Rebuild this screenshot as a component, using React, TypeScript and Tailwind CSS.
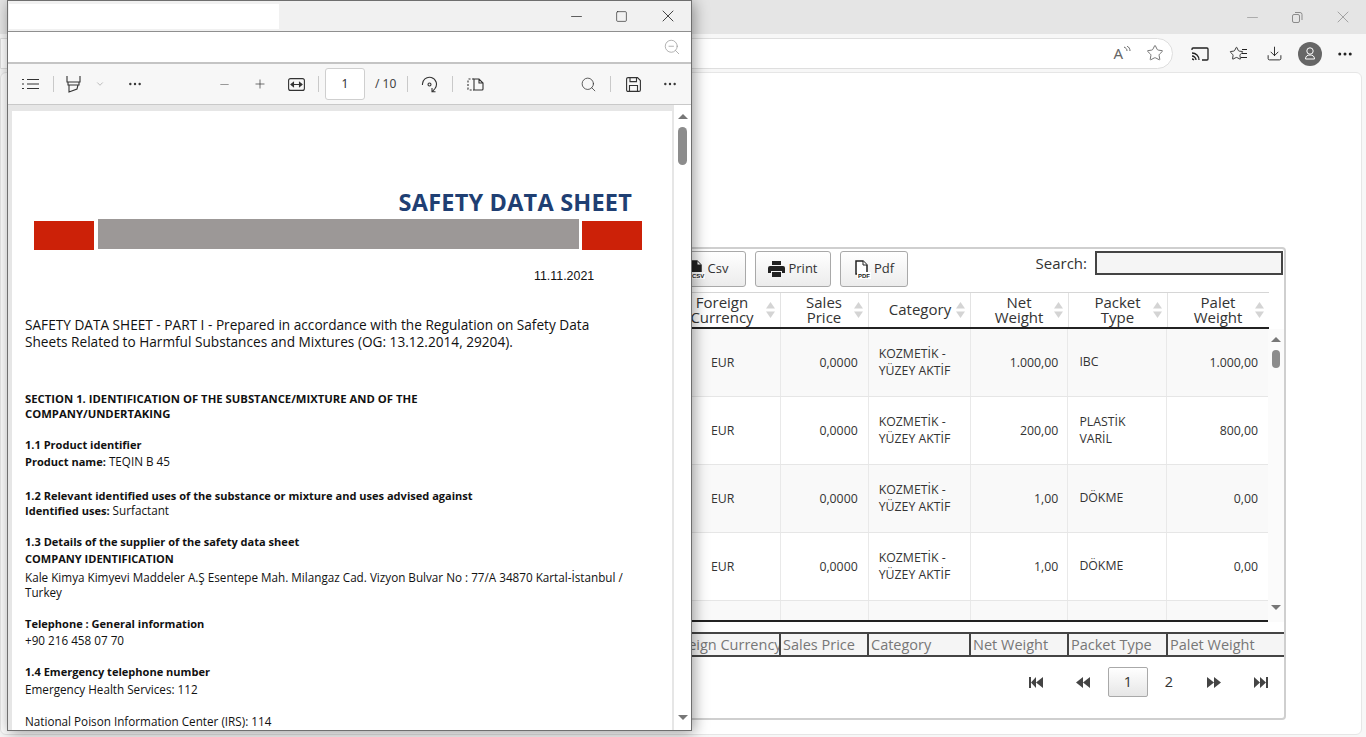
import React from 'react';
import { ChevronDown, Minus, Plus, Search, X, Square, MoreHorizontal, ZoomOut, Star, Download } from 'lucide-react';

const rows = [
  { net: '1.000,00', packet: ['IBC'], palet: '1.000,00' },
  { net: '200,00', packet: ['PLASTİK', 'VARİL'], palet: '800,00' },
  { net: '1,00', packet: ['DÖKME'], palet: '0,00' },
  { net: '1,00', packet: ['DÖKME'], palet: '0,00' },
];

const footerCols = [
  { label: 'Foreign Currency', w: 'w-[112px] indent-[-5px]' },
  { label: 'Sales Price', w: 'w-[88px]' },
  { label: 'Category', w: 'w-[102px]' },
  { label: 'Net Weight', w: 'w-[98px]' },
  { label: 'Packet Type', w: 'w-[99px]' },
  { label: 'Palet Weight', w: 'w-[118px]' },
];

function SortArrows() {
  return (
    <svg width="9" height="16" viewBox="0 0 9 16" className="shrink-0 text-[#d4d4d4]" fill="currentColor">
      <path d="M4.5 0 9 6.5H0z" />
      <path d="M4.5 16 0 9.500h9z" />
    </svg>
  );
}

function HeaderCell({ lines, w }: { lines: string[]; w: string }) {
  return (
    <div className={`${w} flex items-center justify-between pr-[5px] border-r border-[#e3e3e3] last:border-r-0`}>
      <div className="flex-1 text-center text-[15px] leading-[15px] text-[#333] pb-[1px]">
        {lines.map((l) => (
          <div key={l}>{l}</div>
        ))}
      </div>
      <SortArrows />
    </div>
  );
}

function Row({ r, odd }: { r: (typeof rows)[number] | null; odd: boolean }) {
  return (
    <div className={`flex h-[68px] shrink-0 border-b border-[#e6e6e6] text-[12.3px] leading-[17px] text-[#333] ${odd ? 'bg-[#f9f9f9]' : 'bg-white'}`}>
      <div className="w-[112px] flex items-center pl-[42px] border-r border-[#e9e9e9]">{r && 'EUR'}</div>
      <div className="w-[88px] flex items-center justify-end pr-[10px] border-r border-[#e9e9e9]">{r && '0,0000'}</div>
      <div className="w-[102px] flex items-center pl-[10px] pb-[2px] border-r border-[#e9e9e9]">
        {r && (
          <div>
            <div>KOZMETİK -</div>
            <div>YÜZEY AKTİF</div>
          </div>
        )}
      </div>
      <div className="w-[98px] flex items-center justify-end pr-[9px] border-r border-[#e9e9e9]">{r?.net}</div>
      <div className="w-[99px] flex items-center pl-[11px] pb-[2px] border-r border-[#e9e9e9]">
        {r && (
          <div>
            {r.packet.map((p) => (
              <div key={p}>{p}</div>
            ))}
          </div>
        )}
      </div>
      <div className="w-[101px] flex items-center justify-end pr-[10px]">{r?.palet}</div>
    </div>
  );
}

function ToolButton({ children, w }: { children: React.ReactNode; w: string }) {
  return (
    <button className={`${w} h-[36px] flex items-center justify-center gap-[3px] rounded-[3px] border border-[#a9a9a9] bg-gradient-to-b from-white to-[#ececec] text-[13px] text-[#333]`}>
      {children}
    </button>
  );
}

function FileIcon({ tag }: { tag: string }) {
  return (
    <svg width="17" height="19" viewBox="0 0 17 19">
      <path d="M2 1h7l4 4v9H2z" fill={tag === 'CSV' ? '#222' : 'white'} stroke="#222" strokeWidth="1.500" />
      <path d="M9 1v4h4" fill="white" stroke="#222" strokeWidth="1" />
      <rect x="3" y="12" width="14" height="7" fill="white" />
      <text x="4" y="18" fontSize="6" fontWeight="700" fontFamily="Liberation Sans, sans-serif" fill="#222">{tag}</text>
    </svg>
  );
}

function PagerIcon({ d }: { d: string }) {
  return (
    <svg width="14" height="11" viewBox="0 0 14 11" fill="#444">
      <path d={d} />
    </svg>
  );
}

function Divider() {
  return <div className="h-[16px] w-px bg-[#c9c9c9]" />;
}

function BrowserWindow() {
  return (
    <div className="w-[1366px] h-[737px] flex flex-col bg-[#f7f7f7]">
      <div className="h-[34px] shrink-0 bg-[#e5e5e5] flex justify-end items-center gap-[29px] pr-[13px] text-[#8b8b8b]">
        <Minus size={17} strokeWidth={0.900} />
        <svg width="14" height="14" viewBox="0 0 14 14" fill="none" stroke="currentColor">
          <rect x="2.500" y="4.500" width="7" height="8" rx="1.500" />
          <path d="M5 2.500h5a2 2 0 0 1 2 2V10" />
        </svg>
        <X size={20} strokeWidth={0.900} />
      </div>
      <div className="h-[38px] shrink-0 flex items-center pr-[12px]">
        <div className="w-[1173px] h-[31px] bg-white border border-[#dedede] rounded-r-full flex justify-end items-center gap-[15px] pr-[8px] text-[#666]">
          <div className="relative text-[15px] leading-none pr-[8px] font-['Noto_Sans',sans-serif]">
            A
            <svg width="8" height="10" viewBox="0 0 8 10" fill="none" stroke="currentColor" className="absolute right-0 top-0">
              <path d="M1 1c2 1 3 2 3 4M4 0c2 1 3 3 3 5" />
            </svg>
          </div>
          <Star size={18} strokeWidth={1.200} />
        </div>
        <div className="flex items-center text-[#222] pt-[1px]">
          <svg width="18" height="14" viewBox="0 0 18 14" fill="none" stroke="currentColor" strokeWidth="1.300" className="ml-[18px]">
            <path d="M1 3V2a1 1 0 0 1 1-1h14a1 1 0 0 1 1 1v10a1 1 0 0 1-1 1h-5" />
            <path d="M1 6c4 0 7 3 7 7M1 9c2 0 4 2 4 4M1 12c1 0 1 0 2 1" />
          </svg>
          <div className="relative ml-[20px] w-[18px] h-[17px]">
            <Star size={15} strokeWidth={1.400} className="absolute left-0 top-[1px]" />
            <div className="absolute right-0 top-[4px] w-[5px] h-px bg-[#222]" />
            <div className="absolute right-0 top-[8px] w-[5px] h-px bg-[#222]" />
            <div className="absolute right-0 top-[12px] w-[6px] h-px bg-[#222]" />
          </div>
          <Download size={17} strokeWidth={1.300} className="ml-[19px]" />
          <div className="ml-[15px] w-[24px] h-[24px] rounded-full bg-[#666] flex items-center justify-center">
            <svg width="12" height="13" viewBox="0 0 12 13" fill="none" stroke="white" strokeWidth="1">
              <circle cx="6" cy="4" r="3.200" />
              <path d="M1.500 12c0-3 2-4 4.500-4s4.500 1 4.500 4z" />
            </svg>
          </div>
          <MoreHorizontal size={18} className="ml-[14px]" />
        </div>
      </div>
      <div className="flex-1 mr-[4px] mb-[2px] bg-white border border-[#e6e6e6] rounded-[6px] flex justify-end pt-[174px] pr-[75px] pb-[14px]">
        <div className="w-[626px] border-2 border-[#cfcfcf] rounded-[4px] bg-white flex flex-col pl-[7px]">
          <div className="flex items-start h-[43px] pt-[1px]">
            <div className="flex gap-[9px] ml-[1px] pt-[1px]">
              <ToolButton w="w-[76px]">
                <FileIcon tag="CSV" />
                Csv
              </ToolButton>
              <ToolButton w="w-[76px]">
                <svg width="17" height="16" viewBox="0 0 17 16" fill="#222">
                  <path d="M4 0h9v4H4zM2 5h13a2 2 0 0 1 2 2v5h-3v-2H3v2H0V7a2 2 0 0 1 2-2zM4 11h9v5H4z" />
                </svg>
                Print
              </ToolButton>
              <ToolButton w="w-[68px]">
                <FileIcon tag="PDF" />
                Pdf
              </ToolButton>
            </div>
            <div className="ml-auto flex items-center gap-[8px] text-[15px] text-[#333] pt-[1px] pr-[1px]">
              Search:
              <div className="w-[188px] h-[24px] border-2 border-[#444] bg-[#f5f5f5]" />
            </div>
          </div>
          <div className="flex h-[37px] w-[600px] border-t border-[#d6d6d6] border-b-2 border-b-[#222]">
            <HeaderCell lines={['Foreign', 'Currency']} w="w-[112px] pl-[9px]" />
            <HeaderCell lines={['Sales', 'Price']} w="w-[88px] pl-[13px]" />
            <HeaderCell lines={['Category']} w="w-[102px] pl-[15px]" />
            <HeaderCell lines={['Net', 'Weight']} w="w-[98px] pl-[13px]" />
            <HeaderCell lines={['Packet', 'Type']} w="w-[99px] pl-[13px]" />
            <HeaderCell lines={['Palet', 'Weight']} w="w-[101px] pl-[13px]" />
          </div>
          <div className="flex h-[293px]">
            <div className="w-[600px] h-full overflow-hidden border-b-2 border-b-[#222] flex flex-col">
              {rows.map((r, i) => (
                <Row key={i} r={r} odd={i % 2 === 0} />
              ))}
              <Row r={null} odd />
            </div>
            <div className="w-[16px] h-full bg-[#fbfbfb] relative flex flex-col items-center pt-[8px]">
              <div className="w-0 h-0 border-x-[5px] border-x-transparent border-b-[5px] border-b-[#777]" />
              <div className="mt-[8px] w-[8px] h-[18px] rounded-full bg-[#8c8c8c]" />
              <div className="mt-auto mb-[12px] w-0 h-0 border-x-[5px] border-x-transparent border-t-[5px] border-t-[#777]" />
            </div>
          </div>
          <div className="mt-[10px] flex h-[25px] border-y-2 border-[#444] bg-[#f5f5f5] overflow-hidden">
            {footerCols.map((c) => (
              <div key={c.label} className={`${c.w} shrink-0 whitespace-nowrap overflow-hidden border-r-2 border-[#444] last:border-r-0 pl-[2px] text-[14.5px] leading-[21px] text-[#777]`}>
                {c.label}
              </div>
            ))}
          </div>
          <div className="flex items-center justify-end h-[49px] pr-[16px] pt-[1px] text-[14.5px] text-[#333]">
            <PagerIcon d="M0 0h2v11H0zM7 0v11L2 5.500zM14 0v11L7 5.500z" />
            <div className="ml-[33px]"><PagerIcon d="M7 0v11L0 5.500zM14 0v11L7 5.500z" /></div>
            <div className="ml-[18px] w-[40px] h-[30px] rounded-[2px] border border-[#a9a9a9] bg-gradient-to-b from-white to-[#e6e6e6] flex items-center justify-center">1</div>
            <div className="w-[42px] text-center">2</div>
            <div className="ml-[17px]"><PagerIcon d="M0 0v11l7-5.500zM7 0v11l7-5.500z" /></div>
            <div className="ml-[33px]"><PagerIcon d="M0 0v11l6-5.500zM6 0v11l6-5.500zM12 0h2v11h-2z" /></div>
          </div>
        </div>
      </div>
    </div>
  );
}

function PdfPage() {
  return (
    <div className="flex-1 bg-white overflow-hidden pt-[79px] px-[13px] text-[#111] font-['Open_Sans',sans-serif]">
      <div className="text-right pr-[27px] text-[23.500px] leading-[24px] font-bold text-[#1f3f73] tracking-[0.2px]">SAFETY DATA SHEET</div>
      <div className="flex items-start gap-[4px] mt-[5px] ml-[9px]">
        <div className="w-[60px] h-[29px] mt-[2px] bg-[#cc2108]" />
        <div className="w-[481px] h-[30px] bg-[#9c9897]" />
        <div className="w-[60px] h-[29px] mt-[2px] -ml-[1px] bg-[#cc2108]" />
      </div>
      <div className="mt-[18px] ml-[509px] text-[12.400px] leading-[16px] font-['Liberation_Sans',sans-serif]">11.11.2021</div>
      <div className="mt-[32px] text-[13.650px] leading-[17px] w-[600px]">
        <div className="whitespace-nowrap">SAFETY DATA SHEET - PART I - Prepared in accordance with the Regulation on Safety Data</div>
        <div className="whitespace-nowrap">Sheets Related to Harmful Substances and Mixtures (OG: 13.12.2014, 29204).</div>
      </div>
      <div className="mt-[41px] text-[11.300px] leading-[15px] font-bold">
        <div>SECTION 1. IDENTIFICATION OF THE SUBSTANCE/MIXTURE AND OF THE</div>
        <div>COMPANY/UNDERTAKING</div>
      </div>
      <div className="mt-[16px] text-[11.700px] leading-[16px]">
        <div className="font-bold text-[11.050px]">1.1 Product identifier</div>
        <div><span className="font-bold text-[11.050px]">Product name:</span> TEQIN B 45</div>
      </div>
      <div className="mt-[19px] text-[11.700px] leading-[14px]">
        <div className="font-bold text-[11.050px]">1.2 Relevant identified uses of the substance or mixture and uses advised against</div>
        <div><span className="font-bold text-[11.050px]">Identified uses:</span> Surfactant</div>
      </div>
      <div className="mt-[15px] text-[11.700px] leading-[17px]">
        <div className="font-bold text-[11.050px]">1.3 Details of the supplier of the safety data sheet</div>
        <div className="font-bold text-[11.050px]">COMPANY IDENTIFICATION</div>
        <div className="mt-[3px] leading-[15px] whitespace-nowrap">Kale Kimya Kimyevi Maddeler A.Ş Esentepe Mah. Milangaz Cad. Vizyon Bulvar No : 77/A 34870 Kartal-İstanbul /</div>
        <div className="leading-[15px]">Turkey</div>
      </div>
      <div className="mt-[16px] text-[11.700px] leading-[16px]">
        <div className="font-bold text-[11.050px]">Telephone : General information</div>
        <div>+90 216 458 07 70</div>
      </div>
      <div className="mt-[15px] text-[11.700px] leading-[17px]">
        <div className="font-bold text-[11.050px]">1.4 Emergency telephone number</div>
        <div className="mt-[1px]">Emergency Health Services: 112</div>
      </div>
      <div className="mt-[15px] text-[11.700px] leading-[17px]">National Poison Information Center (IRS): 114</div>
    </div>
  );
}

function PdfWindow() {
  return (
    <div className="absolute left-[7px] top-0 w-[685px] h-[731px] border border-[#6f6f6f] flex flex-col bg-[#e6e6e6] shadow-[2px_2px_14px_rgba(0,0,0,0.4)]">
      <div className="h-[31px] shrink-0 bg-[#f1f1f1] flex items-center border-b border-[#8f8f8f]">
        <div className="ml-[1px] w-[270px] h-[25px] bg-white" />
        <div className="ml-auto flex items-center pr-[13px] text-[#222]">
          <Minus size={17} strokeWidth={1} />
          <Square size={13} strokeWidth={1.200} className="ml-[30px]" />
          <X size={20} strokeWidth={1} className="ml-[30px]" />
        </div>
      </div>
      <div className="h-[32px] shrink-0 bg-white border-b-2 border-[#c4c4c4] flex items-center justify-end pr-[10px] text-[#999]">
        <ZoomOut size={18} strokeWidth={1} />
      </div>
      <div className="h-[41px] shrink-0 bg-[#f7f7f7] border-b border-[#c9c9c9] flex items-center text-[#333]">
        <svg width="17" height="12" viewBox="0 0 17 12" fill="none" stroke="currentColor" strokeWidth="1.100" className="ml-[14px]">
          <path d="M0 1.500h2M5 1.500h12M0 6h2M5 6h12M0 10.500h2M5 10.500h12" />
        </svg>
        <div className="ml-[14px]"><Divider /></div>
        <svg width="15" height="17" viewBox="0 0 15 17" fill="none" stroke="currentColor" strokeWidth="1.100" className="ml-[12px]">
          <path d="M1 0v6h13V0M2 6v3h11V6M3 9v7l8-3 1-4" />
        </svg>
        <ChevronDown size={10} strokeWidth={1} className="ml-[14px] text-[#666]" />
        <MoreHorizontal size={16} strokeWidth={1.600} className="ml-[22px]" />
        <Minus size={13} strokeWidth={1.200} className="ml-[75px] text-[#666]" />
        <Plus size={14} strokeWidth={1.200} className="ml-[22px]" />
        <svg width="17" height="13" viewBox="0 0 17 13" fill="none" stroke="currentColor" strokeWidth="1.100" className="ml-[21px]">
          <rect x="0.600" y="0.600" width="15.800" height="11.800" rx="2" />
          <path d="M3 6.500h11M3 6.500l2.500-2v4zM14 6.500l-2.500-2v4z" fill="currentColor" />
        </svg>
        <div className="ml-[13px]"><Divider /></div>
        <div className="ml-[6px] w-[40px] h-[32px] rounded-[3px] border border-[#cfcfcf] bg-white flex items-center justify-center text-[12px] font-['Noto_Sans',sans-serif]">1</div>
        <div className="ml-[10px] text-[12px] font-['Noto_Sans',sans-serif] text-[#444]">/ 10</div>
        <div className="ml-[11px]"><Divider /></div>
        <svg width="17" height="17" viewBox="0 0 17 17" fill="none" stroke="currentColor" strokeWidth="1.100" className="ml-[13px]">
          <path d="M1.500 9a7 7 0 1 1 12.500 3.500L11.500 15.500M11 12v3.800h3.500" />
          <circle cx="8.500" cy="8.500" r="1.500" />
        </svg>
        <div className="ml-[14px]"><Divider /></div>
        <svg width="17" height="13" viewBox="0 0 17 13" fill="none" stroke="currentColor" strokeWidth="1.100" className="ml-[14px]">
          <path d="M7 1H2a1 1 0 0 0-1 1v9a1 1 0 0 0 1 1h5" strokeDasharray="2 1.500" />
          <path d="M7 1h5l4 4v6a1 1 0 0 1-1 1H7zM12 1v4h4" />
        </svg>
        <Search size={17} strokeWidth={1.100} className="ml-[96px]" />
        <div className="ml-[13px]"><Divider /></div>
        <svg width="15" height="15" viewBox="0 0 15 15" fill="none" stroke="currentColor" strokeWidth="1.100" className="ml-[15px]">
          <path d="M2 .6h9.500l2.900 2.900V13a1.400 1.400 0 0 1-1.400 1.400H2A1.400 1.400 0 0 1 .6 13V2A1.400 1.400 0 0 1 2 .6z" />
          <path d="M4 .6v4h6.500v-4M3.500 14.400V8.500h8v5.900" />
        </svg>
        <MoreHorizontal size={16} strokeWidth={1.600} className="ml-[21px]" />
      </div>
      <div className="flex-1 flex min-h-0">
        <div className="flex-1 flex pl-[4px] pt-[6px] pr-[2px] bg-[#e6e6e6]">
          <PdfPage />
        </div>
        <div className="w-[17px] bg-white flex flex-col items-center pt-[9px]">
          <div className="w-0 h-0 border-x-[5px] border-x-transparent border-b-[5px] border-b-[#777]" />
          <div className="mt-[8px] w-[9px] h-[38px] rounded-full bg-[#8c8c8c]" />
          <div className="mt-auto mb-[10px] w-0 h-0 border-x-[5px] border-x-transparent border-t-[5px] border-t-[#777]" />
        </div>
      </div>
    </div>
  );
}

export default function App() {
  return (
    <div className="relative w-[1366px] h-[737px] overflow-hidden font-['Open_Sans',sans-serif]">
      <BrowserWindow />
      <PdfWindow />
    </div>
  );
}
